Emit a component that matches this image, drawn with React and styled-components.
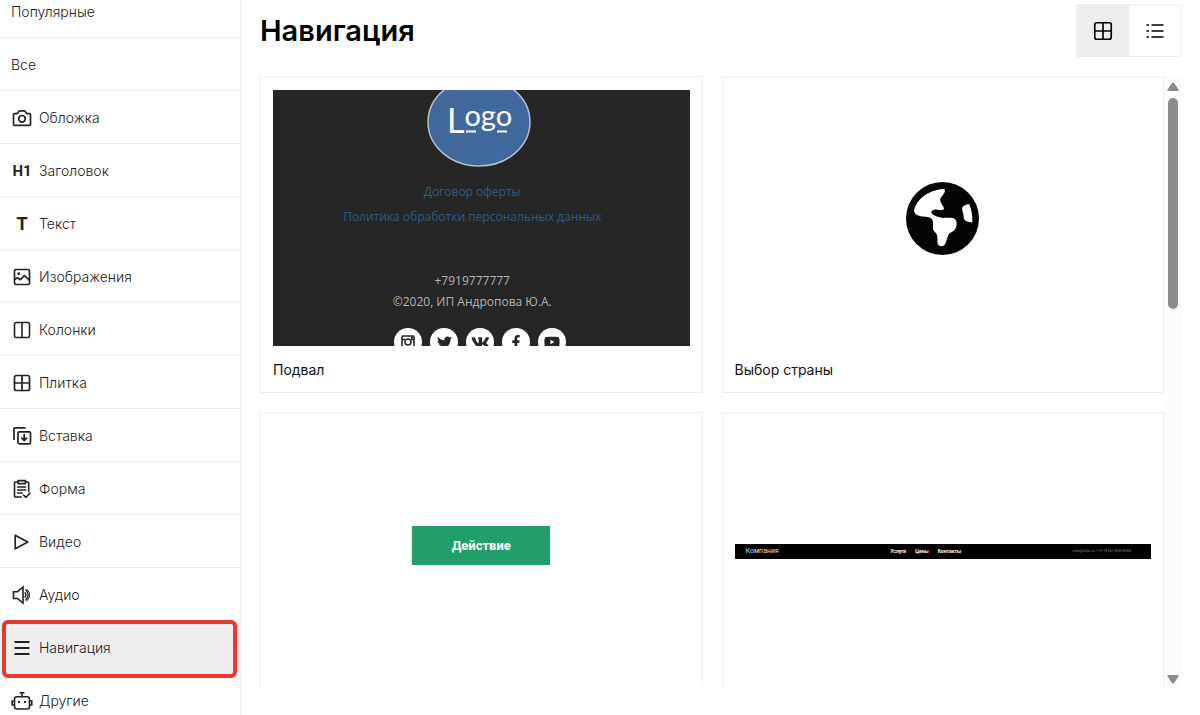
import React from "react";
import styled, { createGlobalStyle } from "styled-components";
import { FaTwitter, FaVk, FaFacebookF, FaYoutube } from "react-icons/fa";

const GlobalStyle = createGlobalStyle`
  * { box-sizing: border-box; }
  body {
    margin: 0;
    background: #fff;
    color: #111;
    font-family: Inter, "Liberation Sans", sans-serif;
  }
`;

const Page = styled.div`
  display: flex;
  height: 100vh;
  overflow: hidden;
`;

const Sidebar = styled.nav`
  flex: 0 0 241px;
  overflow: hidden;
  border-right: 1px solid #eee;
`;

const CategoryList = styled.ul`
  margin: -15px 0 0;
  padding: 0;
  list-style: none;
`;

const CategoryLink = styled.a`
  position: relative;
  display: flex;
  align-items: center;
  gap: 6px;
  height: 53px;
  padding: 1px 11px 0;
  border-bottom: 1px solid #eee;
  background: ${(p) => (p.$active ? "#eee" : "transparent")};
  color: #222;
  font-size: 14px;
  font-weight: 300;
  line-height: 20px;
  text-decoration: none;

  &::after {
    content: "";
    display: ${(p) => (p.$active ? "block" : "none")};
    position: absolute;
    z-index: 1;
    inset: -1px 3px -5px 2px;
    border: 4px solid #e5392d;
    border-radius: 6px;
  }
`;

const IconBox = styled.span`
  display: flex;
  flex: 0 0 22px;
  align-items: center;
  justify-content: center;
  color: #222;
`;

const Glyph = styled.span`
  font-family: Roboto, sans-serif;
  font-size: ${(p) => p.$size}px;
  font-weight: 700;
`;

const Main = styled.main`
  display: flex;
  flex: 1;
  flex-direction: column;
  gap: 19px;
  min-width: 0;
  padding: 4px 18px 28px 19px;
`;

const Header = styled.header`
  display: flex;
  align-items: center;
  justify-content: space-between;
`;

const Title = styled.h1`
  margin: 0;
  color: #000;
  font-size: 29px;
  font-weight: 600;
  line-height: 36px;
`;

const ViewToggle = styled.div`
  display: flex;
  border: 1px solid #eee;
  border-radius: 2px;
`;

const ViewButton = styled.button`
  display: flex;
  align-items: center;
  justify-content: center;
  width: 52px;
  height: 51px;
  padding: 0;
  border: 0;
  background: ${(p) => (p.$active ? "#eee" : "#fff")};
  color: #000;
`;

const ScrollArea = styled.div`
  display: flex;
  flex: 1;
  min-height: 0;
`;

const CardGrid = styled.div`
  display: grid;
  flex: 1;
  grid-template-columns: 1fr 1fr;
  align-content: start;
  gap: 19px;
  min-width: 0;
  overflow: hidden;
`;

const Card = styled.article`
  min-width: 0;
  padding: 13px 12px 12px;
  border: 1px solid #eee;
`;

const Preview = styled.div`
  display: flex;
  align-items: center;
  justify-content: center;
  aspect-ratio: 13 / 8;
  padding-bottom: ${(p) => p.$lift || 0}px;
  overflow: hidden;
`;

const CardTitle = styled.h2`
  margin: 14px 0 0;
  color: #111;
  font-size: 14px;
  font-weight: 400;
  line-height: 20px;
`;

const FooterPreview = styled.div`
  display: flex;
  flex-direction: column;
  align-items: center;
  aspect-ratio: 13 / 8;
  overflow: hidden;
  background: #262626;
  font-family: "Open Sans", sans-serif;
  font-weight: 400;

  & > * { flex-shrink: 0; }
`;

const Logo = styled.svg`
  margin: -12px 4px 11px 0;
`;

const FooterLines = styled.div`
  display: flex;
  flex-direction: column;
  align-items: center;
  margin: 0 18px ${(p) => p.$after}px 0;
  color: #b4b4b4;
  font-size: 12px;
  line-height: ${(p) => p.$line}px;
  white-space: nowrap;
`;

const FooterLink = styled.a`
  color: #315a82;
  text-decoration: none;
`;

const SocialRow = styled.div`
  display: flex;
  gap: 8px;
  margin-right: 2px;
`;

const SocialLink = styled.a`
  display: flex;
  align-items: center;
  justify-content: center;
  width: 28px;
  height: 28px;
  border-radius: 50%;
  background: #fff;
  color: #262626;
`;

const ActionButton = styled.button`
  width: 138px;
  height: 39px;
  padding: 0;
  border: 0;
  background: #209f6b;
  color: #fff;
  font-family: Roboto, sans-serif;
  font-size: 13px;
  font-weight: 700;
`;

const SiteBar = styled.div`
  display: flex;
  align-items: center;
  justify-content: space-between;
  width: 100%;
  height: 15px;
  padding: 0 20px 0 11px;
  background: #000;
  font-family: Roboto, sans-serif;
  line-height: 14px;
`;

const SiteName = styled.span`
  color: #ddd;
  font-size: 7px;
`;

const SiteLinks = styled.span`
  display: flex;
  gap: 9px;
`;

const SiteLink = styled.a`
  color: #fff;
  font-size: 5px;
  font-weight: 700;
  text-decoration: none;
`;

const SiteContact = styled.span`
  color: #888;
  font-size: 4px;
`;

const ScrollTrack = styled.div`
  display: flex;
  flex: 0 0 18px;
  flex-direction: column;
  align-items: center;
  padding: 6px 0 3px;
  background: #fcfcfc;
`;

const ScrollThumb = styled.div`
  flex: 0 0 35%;
  width: 10px;
  margin: 7px 0 auto;
  border-radius: 5px;
  background: #8b8b8b;
`;

const Stroke = ({ size = 20, width = 2, children }) => (
  <svg
    width={size}
    height={size}
    viewBox="0 0 20 20"
    fill="none"
    stroke="currentColor"
    strokeWidth={width}
    strokeLinecap="round"
    strokeLinejoin="round"
    aria-hidden="true"
  >
    {children}
  </svg>
);

const CameraIcon = () => (
  <Stroke width={1.7}>
    <path d="M1.5 16.5V6.4q0-.8.8-.8h2.9L7.5 2.8h5l2.3 2.8h2.9q.8 0 .8.8v10.1q0 .8-.8.8H2.3q-.8 0-.8-.8Z" />
    <circle cx="10" cy="10.8" r="3.3" />
  </Stroke>
);
const ImageIcon = () => (
  <Stroke width={1.7}>
    <rect x="2.5" y="2.5" width="15" height="15" rx="1.4" />
    <path d="m3 12.2 2.6-1.5 2.8 2 4-4.1 5 4.5" />
    <circle cx="6.8" cy="6.8" r=".6" fill="currentColor" />
  </Stroke>
);
const ColumnsIcon = () => (
  <Stroke width={1.6}>
    <rect x="2.5" y="2.5" width="15" height="15" rx="1.4" />
    <path d="M10 2.5v15" />
  </Stroke>
);
const TilesIcon = ({ size, width = 1.7 }) => (
  <Stroke size={size} width={width}>
    <rect x="2.5" y="2.5" width="15" height="15" rx="1.8" />
    <path d="M10 2.5v15M2.5 10h15" />
  </Stroke>
);
const InsertIcon = () => (
  <Stroke width={1.7}>
    <path d="M2 13.3V2.7q0-.9.9-.9H13" />
    <rect x="6" y="5.8" width="12.5" height="12" rx="1.2" />
    <path d="M12.2 8.6v6M9.8 12.1l2.4 2.5 2.4-2.5" />
  </Stroke>
);
const FormIcon = () => (
  <Stroke width={1.6}>
    <path d="M6 3H3.3q-.8 0-.8.8v13.4q0 .8.8.8h6M13.5 3h2.4q.8 0 .8.8v9M6 1.6h7.5v3H6ZM5.6 8h8M5.6 11h8M5.6 14h4.6M11.5 16l2.3 2.4 4.2-4.2" />
  </Stroke>
);
const PlayIcon = () => (
  <Stroke width={1.7}>
    <path d="M3.2 3.2v13.6L15.8 10Z" />
  </Stroke>
);
const AudioIcon = () => (
  <Stroke width={1.6}>
    <path d="M1.5 6.700h4L11 2v16l-5.500-4.500h-4Z" strokeLinejoin="miter" />
    <path d="M13 7.800q2 2.200 0 4.400M13.800 5q4.600 5 0 10" strokeWidth="1.3" />
    <path d="M15 4.300q5.800 5.700 0 11.400" strokeWidth="1" />
  </Stroke>
);
const MenuIcon = () => (
  <Stroke width={1.9}>
    <path d="M2.500 4h15M2.500 10h15M2.500 16h15" strokeLinecap="butt" />
  </Stroke>
);
const RobotIcon = () => (
  <svg width="22" height="20" viewBox="0 0 22 20" fill="none" stroke="currentColor" strokeWidth="1.6" aria-hidden="true">
    <path d="M8.500 1.700h5M11 1.700v4" />
    <rect x="3.500" y="5.700" width="15" height="12.300" rx="2.500" />
    <path d="M3.500 10H1.200v4h2.300M18.500 10h2.300v4h-2.300" />
    <path d="M7 11h2M13 11h2" strokeWidth="2" />
  </svg>
);
const ListIcon = () => (
  <Stroke width={1.7}>
    <path d="M6.500 4H18.500M6.500 10H18.500M6.500 16H18.500M1.500 4h2.500M1.500 10h2.500M1.500 16h2.500" strokeLinecap="butt" />
  </Stroke>
);
const GlobeIcon = () => (
  <svg width="73" height="73" viewBox="80 66 216 216" aria-hidden="true">
    <circle cx="188" cy="174" r="108" fill="#050505" />
    <g fill="#fff">
      <path d="M192 86C142 91 111 119 104 149q-1 6 4 11 7 8 30 9 21 1 22 16v20q1 6 8 12 5 5 5 13v14q1 12 12 12 9 0 13-12 3-9 6-18 2-7 10-11 17-9 16-27-1-18-24-16h-12q-6 1-13-1-13-3-21-8-8-6-3-12 7-5 17-3 8 2 13 1 8-2 4-9-10-14-10-23 0-5 8-12 8-8 6-16-1-3-4-3Z" />
      <path d="M267 131q-11 1-18 7-5 4-2 14 4 9 4 21 3 11 25 13 2-30-9-55Z" />
    </g>
  </svg>
);
const InstagramIcon = () => (
  <svg width="14" height="14" viewBox="0 0 14 14" fill="none" stroke="currentColor" aria-hidden="true">
    <rect x="1" y="1" width="12" height="12" rx="1" strokeWidth="1.6" />
    <path d="M1 4.500h3M10 4.500h3" strokeWidth="1.500" />
    <circle cx="7" cy="7" r="3" strokeWidth="1.500" />
    <path d="M10 2.800h2" strokeWidth="2" />
  </svg>
);
const ArrowIcon = ({ down }) => (
  <svg width="12" height="9" viewBox="0 0 12 9" fill="#8b8b8b" aria-hidden="true">
    <path d={down ? "M1 0h10q1.200 0 .5 1.200L7.500 7.500q-1.500 2-3 0L.5 1.200Q-.2 0 1 0Z" : "M1 9h10q1.200 0 .5-1.200L7.500 1.500q-1.500-2-3 0L.5 7.800Q-.2 9 1 9Z"} />
  </svg>
);

const categories = [
  { label: "Популярные" },
  { label: "Все" },
  { label: "Обложка", icon: <CameraIcon /> },
  { label: "Заголовок", icon: <Glyph $size={15}>H1</Glyph> },
  { label: "Текст", icon: <Glyph $size={18}>T</Glyph> },
  { label: "Изображения", icon: <ImageIcon /> },
  { label: "Колонки", icon: <ColumnsIcon /> },
  { label: "Плитка", icon: <TilesIcon /> },
  { label: "Вставка", icon: <InsertIcon /> },
  { label: "Форма", icon: <FormIcon /> },
  { label: "Видео", icon: <PlayIcon /> },
  { label: "Аудио", icon: <AudioIcon /> },
  { label: "Навигация", icon: <MenuIcon />, active: true },
  { label: "Другие", icon: <RobotIcon /> },
];

const socials = [
  { name: "Instagram", icon: <InstagramIcon /> },
  { name: "Twitter", icon: <FaTwitter size={15} /> },
  { name: "VK", icon: <FaVk size={19} /> },
  { name: "Facebook", icon: <FaFacebookF size={14} /> },
  { name: "YouTube", icon: <FaYoutube size={16} /> },
];

const LogoBadge = () => (
  <Logo width="104" height="90" viewBox="0 0 104 90" role="img" aria-label="Logo">
    <ellipse cx="52" cy="44" rx="51" ry="44" fill="#42699c" stroke="#b4bfd0" strokeWidth="1.500" />
    <text x="20" y="55" fill="#fff" fontFamily="Lato, sans-serif" fontSize="34">
      L<tspan dy="-7" fontSize="29">ogo</tspan>
    </text>
    <path d="M39 53.500h10M70 53.500h10" stroke="#fff" strokeWidth="2" />
  </Logo>
);

export default function App() {
  return (
    <>
      <GlobalStyle />
      <Page>
        <Sidebar aria-label="Категории">
          <CategoryList>
            {categories.map(({ label, icon, active }) => (
              <li key={label}>
                <CategoryLink href="#" $active={active} aria-current={active ? "page" : undefined}>
                  {icon && <IconBox>{icon}</IconBox>}
                  {label}
                </CategoryLink>
              </li>
            ))}
          </CategoryList>
        </Sidebar>
        <Main>
          <Header>
            <Title>Навигация</Title>
            <ViewToggle>
              <ViewButton type="button" $active aria-label="Сетка" aria-pressed="true">
                <TilesIcon size={22} width={1.5} />
              </ViewButton>
              <ViewButton type="button" aria-label="Список" aria-pressed="false">
                <ListIcon />
              </ViewButton>
            </ViewToggle>
          </Header>
          <ScrollArea>
            <CardGrid>
              <Card>
                <FooterPreview>
                  <LogoBadge />
                  <FooterLines $line={25} $after={41}>
                    <FooterLink href="#">Договор оферты</FooterLink>
                    <FooterLink href="#">Политика обработки персональных данных</FooterLink>
                  </FooterLines>
                  <FooterLines $line={21} $after={16}>
                    <span>+7919777777</span>
                    <span>©2020, ИП Андропова Ю.А.</span>
                  </FooterLines>
                  <SocialRow>
                    {socials.map(({ name, icon }) => (
                      <SocialLink key={name} href="#" aria-label={name}>
                        {icon}
                      </SocialLink>
                    ))}
                  </SocialRow>
                </FooterPreview>
                <CardTitle>Подвал</CardTitle>
              </Card>
              <Card>
                <Preview>
                  <GlobeIcon />
                </Preview>
                <CardTitle>Выбор страны</CardTitle>
              </Card>
              <Card>
                <Preview $lift={18}>
                  <ActionButton type="button">Действие</ActionButton>
                </Preview>
              </Card>
              <Card>
                <Preview $lift={6}>
                  <SiteBar>
                    <SiteName>Компания</SiteName>
                    <SiteLinks>
                      <SiteLink href="#">Услуги</SiteLink>
                      <SiteLink href="#">Цены</SiteLink>
                      <SiteLink href="#">Контакты</SiteLink>
                    </SiteLinks>
                    <SiteContact>info@info.ru / +7 (916) 555-5555</SiteContact>
                  </SiteBar>
                </Preview>
              </Card>
            </CardGrid>
            <ScrollTrack>
              <ArrowIcon />
              <ScrollThumb />
              <ArrowIcon down />
            </ScrollTrack>
          </ScrollArea>
        </Main>
      </Page>
    </>
  );
}
